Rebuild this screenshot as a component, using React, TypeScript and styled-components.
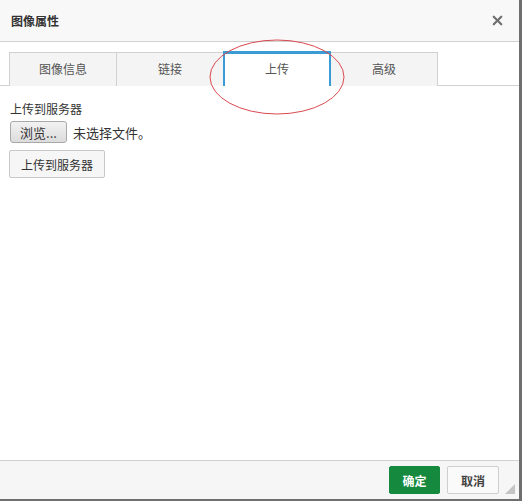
import styled, { createGlobalStyle } from "styled-components";
import { X } from "lucide-react";

const GlobalStyle = createGlobalStyle`
  html, body {
    margin: 0;
    padding: 0;
    background: #6f6f6f;
  }
  body {
    font-family: "Noto Sans CJK SC", "Liberation Sans", sans-serif;
    font-size: 12px;
    color: #333;
  }
`;

const Dialog = styled.div`
  position: relative;
  width: 519px;
  height: 499px;
  background: #fff;
  display: flex;
  flex-direction: column;
`;

const Header = styled.div`
  height: 41px;
  flex-shrink: 0;
  background: #f8f8f8;
  border-bottom: 1px solid #d1d1d1;
  display: flex;
  align-items: center;
  justify-content: space-between;
  padding: 0 14px 0 11px;
`;

const Title = styled.span`
  font-size: 12px;
  font-weight: 700;
  color: #333;
`;

const CloseButton = styled.button`
  border: none;
  background: transparent;
  padding: 0;
  display: flex;
  color: #6f6f6f;
  cursor: pointer;
`;

const Body = styled.div`
  flex: 1;
  position: relative;
  padding-top: 9px;
`;

const TabBar = styled.div`
  display: flex;
  padding-left: 9px;
  border-bottom: 1px solid #d1d1d1;
  height: 34px;
`;

const Tab = styled.div<{ $active?: boolean }>`
  width: 106px;
  height: 30px;
  padding-bottom: 3px;
  margin-top: 1px;
  margin-right: -1px;
  box-sizing: content-box;
  display: flex;
  align-items: center;
  justify-content: center;
  font-size: 12px;
  color: #555;
  background: #f4f4f4;
  border: 1px solid #d1d1d1;
  border-bottom: none;
  ${(p) =>
    p.$active &&
    `
    width: 104px;
    height: 29px;
    margin-top: 0;
    margin-bottom: -1px;
    padding-bottom: 3px;
    background: #fff;
    border-top: 3px solid #3a9bd5;
    border-left: 2px solid #3a9bd5;
    border-right: 2px solid #3a9bd5;
    position: relative;
    z-index: 1;
  `}
`;

const Annotation = styled.svg`
  position: absolute;
  left: 208px;
  top: -4px;
  overflow: visible;
  pointer-events: none;
  z-index: 2;
`;

const Panel = styled.div`
  padding: 16px 10px 0 10px;
  display: flex;
  flex-direction: column;
`;

const Label = styled.div`
  font-size: 12px;
  line-height: 14px;
  color: #333;
`;

const FileRow = styled.div`
  display: flex;
  align-items: center;
  gap: 6px;
  margin-top: 5px;
`;

const BrowseButton = styled.button`
  font-family: inherit;
  font-size: 13px;
  color: #333;
  height: 22px;
  width: 57px;
  padding: 0;
  border: 1px solid #a9a9a9;
  border-radius: 3px;
  background: linear-gradient(#f2f2f2, #dcdcdc);
`;

const FileText = styled.span`
  font-size: 13px;
  color: #333;
`;

const UploadButton = styled.button`
  align-self: flex-start;
  margin-top: 7px;
  margin-left: -1px;
  font-family: inherit;
  font-size: 12px;
  color: #333;
  height: 28px;
  padding: 0 11px;
  border: 1px solid #c8c8c8;
  border-radius: 2px;
  background: #f6f6f6;
`;

const Footer = styled.div`
  height: 38px;
  flex-shrink: 0;
  background: #f6f6f6;
  border-top: 1px solid #d1d1d1;
  display: flex;
  align-items: center;
  justify-content: flex-end;
  gap: 7px;
  padding-right: 20px;
  position: relative;
`;

const FooterButton = styled.button<{ $primary?: boolean }>`
  font-family: inherit;
  font-size: 12px;
  font-weight: 700;
  height: 28px;
  width: ${(p) => (p.$primary ? "51px" : "52px")};
  padding: 0;
  border-radius: 2px;
  border: 1px solid ${(p) => (p.$primary ? "#158a3f" : "#cfcfcf")};
  background: ${(p) => (p.$primary ? "#158a3f" : "#fafafa")};
  color: ${(p) => (p.$primary ? "#fff" : "#444")};
`;

const Grip = styled.svg`
  position: absolute;
  right: 4px;
  bottom: 5px;
`;

export default function App() {
  return (
    <>
      <GlobalStyle />
      <Dialog>
        <Header>
          <Title>图像属性</Title>
          <CloseButton aria-label="关闭">
            <X size={15} strokeWidth={3.5} />
          </CloseButton>
        </Header>
        <Body>
          <TabBar>
            <Tab>图像信息</Tab>
            <Tab>链接</Tab>
            <Tab $active>上传</Tab>
            <Tab>高级</Tab>
          </TabBar>
          <Annotation width="138" height="78" viewBox="0 0 138 78">
            <ellipse cx="69" cy="39" rx="67" ry="37" fill="none" stroke="#d9494f" strokeWidth="1" />
          </Annotation>
          <Panel>
            <Label>上传到服务器</Label>
            <FileRow>
              <BrowseButton>浏览...</BrowseButton>
              <FileText>未选择文件。</FileText>
            </FileRow>
            <UploadButton>上传到服务器</UploadButton>
          </Panel>
        </Body>
        <Footer>
          <FooterButton $primary>确定</FooterButton>
          <FooterButton>取消</FooterButton>
          <Grip width="10" height="10" viewBox="0 0 10 10">
            <polygon points="10,0 10,10 0,10" fill="#c4c4c4" />
          </Grip>
        </Footer>
      </Dialog>
    </>
  );
}
